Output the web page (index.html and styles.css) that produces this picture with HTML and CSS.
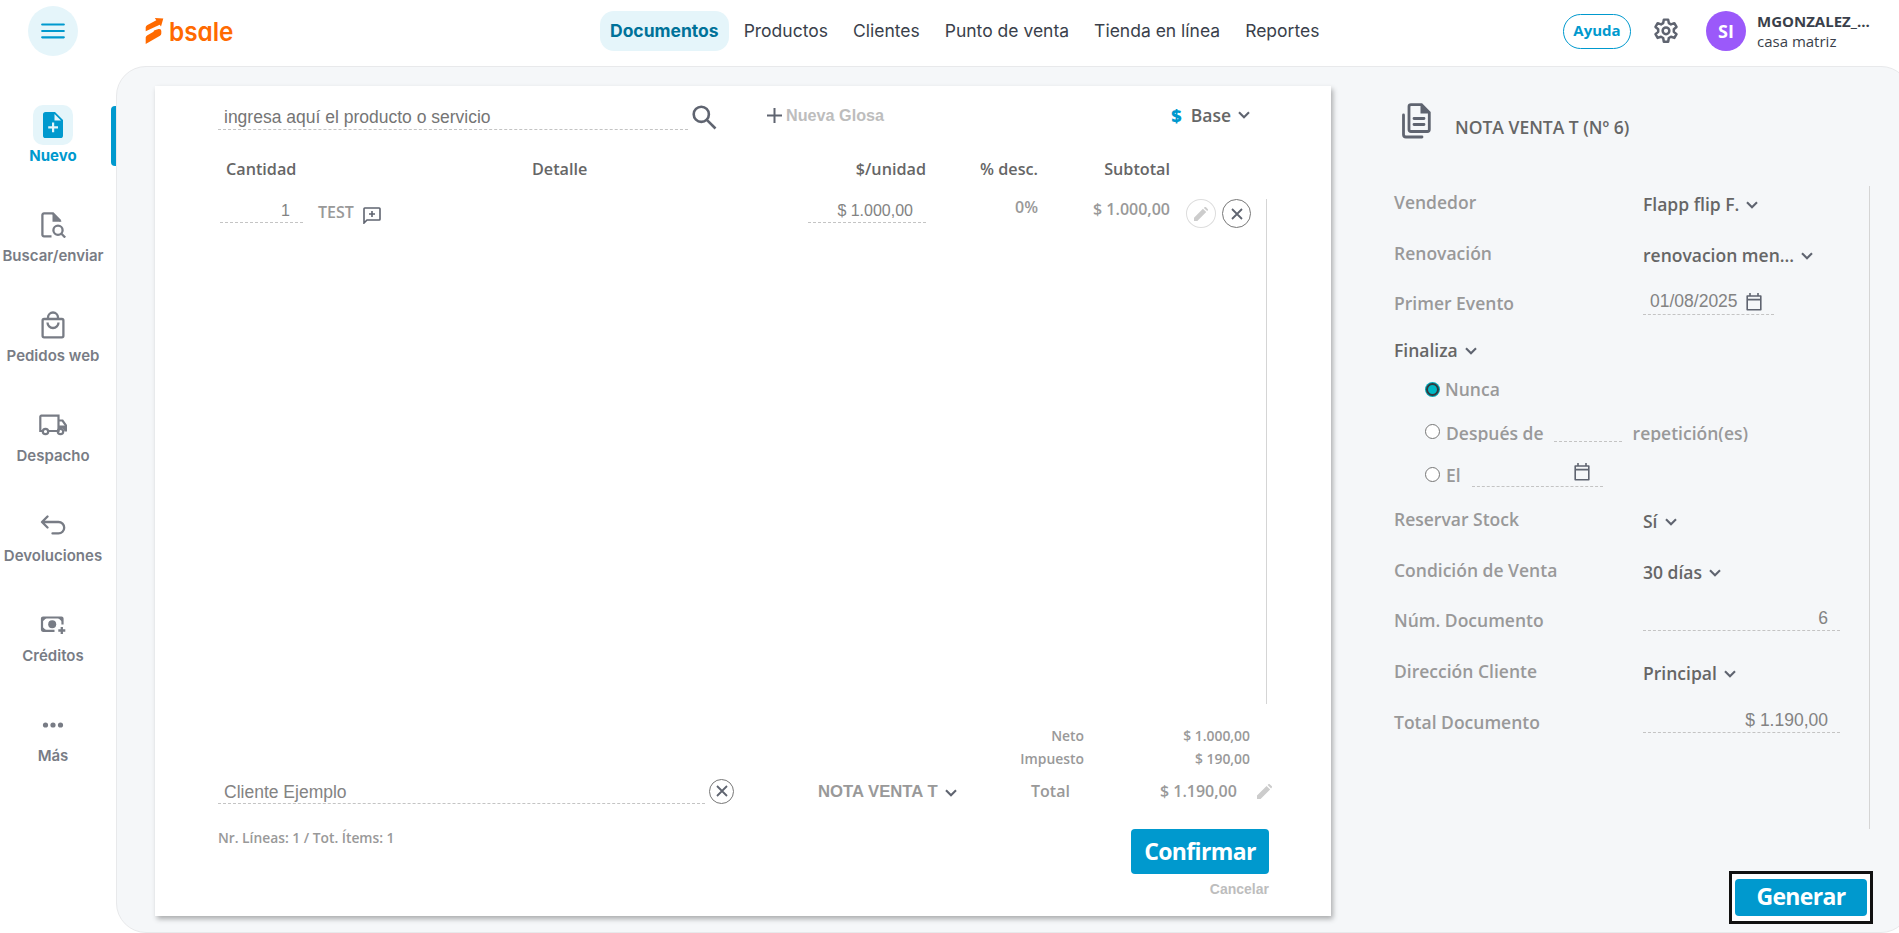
FILE: index.html
```
<!DOCTYPE html>
<html lang="es">
<head>
  <meta charset="UTF-8">
  <title>Bsale - Nota Venta T</title>
  <link rel="stylesheet" href="styles.css">
</head>
<body>
  <!-- Shared icons -->
  <svg class="sprite" aria-hidden="true">
    <symbol id="chevron" viewBox="0 0 12 8"><path d="M1 1.200l5 5 5-5" fill="none" stroke="currentColor" stroke-width="2.100"/></symbol>
    <symbol id="close" viewBox="0 0 12 12"><path d="M1 1l10 10M11 1L1 11" fill="none" stroke="currentColor" stroke-width="1.8"/></symbol>
    <symbol id="pencil" viewBox="0 0 16 16"><path d="M0 12.2L10.2 2l3.8 3.8L3.8 16H0zM11.3 1l.6-.6a1.3 1.3 0 0 1 1.9 0l1.8 1.8a1.3 1.3 0 0 1 0 1.9l-.6.6z" fill="currentColor"/></symbol>
    <symbol id="calendar" viewBox="0 0 16 18"><path d="M1.2 3h13.6v13.8H1.2zM1.2 6.6h13.6M4 0v3M12 0v3" fill="none" stroke="currentColor" stroke-width="1.6" stroke-linejoin="round"/></symbol>
  </svg>

  <div class="app">
    <aside class="sidebar">
      <button class="menu-btn">
        <svg width="24" height="18" viewBox="0 0 24 18"><path d="M1.2 2.5h21.6M1.2 9h21.6M1.2 15.3h21.6" stroke="#0099ce" stroke-width="2.2" stroke-linecap="round"/></svg>
      </button>
      <nav class="side-nav">
        <a class="side-item active">
          <span class="side-icon"><svg width="20" height="26" viewBox="0 0 20 26"><path fill="#0099ce" fill-rule="evenodd" d="M2.6 0H12l8 8v15.400a2.600 2.600 0 0 1-2.600 2.600H2.600A2.600 2.600 0 0 1 0 23.400V2.600A2.600 2.600 0 0 1 2.600 0zM11.500 2v6.500H18zM9 10.500V14.300H5.200V16.500H9V20.300H11.200V16.500H15V14.300H11.200V10.500z"/></svg></span>
          Nuevo
        </a>
        <a class="side-item">
          <span class="side-icon"><svg width="26" height="26" viewBox="0 0 26 26"><g fill="none" stroke="#787c85" stroke-width="2.300"><path d="M11.500 24.300H4A1.600 1.600 0 0 1 2.400 22.700V3A1.600 1.600 0 0 1 4 1.400H13L20.500 9"/><circle cx="18" cy="18.300" r="4.600"/><path d="M21.200 21.500l4 4"/></g><path d="M12.500 1v8.700h9.200z" fill="#787c85"/></svg></span>
          Buscar/enviar
        </a>
        <a class="side-item">
          <span class="side-icon"><svg width="24" height="28" viewBox="0 0 24 28"><g fill="none" stroke="#787c85" stroke-width="2.300"><rect x="1.600" y="8" width="20.800" height="18.300" rx="1.500"/><path d="M7 8V6.500a5 5 0 0 1 10 0V8M6.500 11.500a5.500 5.500 0 0 0 11 0"/></g></svg></span>
          Pedidos web
        </a>
        <a class="side-item">
          <span class="side-icon"><svg width="28" height="22" viewBox="0 0 28 22"><g fill="none" stroke="#787c85" stroke-width="2.200"><path d="M3 17H1.300V2.700A1 1 0 0 1 2.300 1.700H19.500V17H10M19.500 6.500H23.500L27 11.500V17"/><circle cx="6.500" cy="17.500" r="2.700"/><circle cx="21.500" cy="17.500" r="2.700"/></g><path d="M19.500 11.500H28V17.500H25.500A4 4 0 0 0 19.500 14.500z" fill="#787c85"/></svg></span>
          Despacho
        </a>
        <a class="side-item">
          <span class="side-icon"><svg width="26" height="20" viewBox="0 0 26 20"><path d="M7.500 1.500L2 7l5.500 5.500M2.500 7H18.500a5.700 5.700 0 0 1 0 11.400H12.500" fill="none" stroke="#787c85" stroke-width="2.300" stroke-linecap="round" stroke-linejoin="round"/></svg></span>
          Devoluciones
        </a>
        <a class="side-item">
          <span class="side-icon"><svg width="26" height="18" viewBox="0 0 26 18"><g fill="none" stroke="#787c85"><path d="M14.500 14.800H3A1 1 0 0 1 2 13.800V2.500A1 1 0 0 1 3 1.500H21.500A1 1 0 0 1 22.500 2.500V8.500" stroke-width="2.200"/><path d="M21.800 11v7M18.300 14.500h7" stroke-width="2.300"/></g><path d="M2 1.500h5L2 6zM22.500 1.500h-5l5 4.500zM2 15h5l-5-4.500z" fill="#787c85"/><circle cx="12.200" cy="8.200" r="4" fill="#787c85"/></svg></span>
          Créditos
        </a>
        <a class="side-item">
          <span class="side-icon"><svg width="22" height="6" viewBox="0 0 22 6"><g fill="#787c85"><circle cx="3.500" cy="3" r="2.600"/><circle cx="11" cy="3" r="2.600"/><circle cx="18.500" cy="3" r="2.600"/></g></svg></span>
          Más
        </a>
      </nav>
    </aside>

    <div class="content">
      <header class="topbar">
        <svg class="logo" width="90" height="28" viewBox="0 0 90 28">
          <path fill="#ff6a00" d="M.7 14.200V10.200Q.8 9 2 8.200L11.300 3.200 9.800 1 18.300 1.600 16 9.600 14.700 7.700zM.7 27V20.500Q.8 19.300 2 18.500L8.500 14.800 9 13.500 13.500 12Q16.300 11.500 16.300 14V16.500Q16.300 18 15 18.800z"/>
          <text x="24" y="23.500" textLength="64.500" lengthAdjust="spacingAndGlyphs">bsale</text>
        </svg>
        <nav class="top-nav">
          <a class="active">Documentos</a>
          <a>Productos</a>
          <a>Clientes</a>
          <a>Punto de venta</a>
          <a>Tienda en línea</a>
          <a>Reportes</a>
        </nav>
        <div class="user-area">
          <button class="help-btn">Ayuda</button>
          <svg class="gear" width="26" height="26" viewBox="0 0 24 24"><g fill="none" stroke="#5f6470" stroke-width="2.300" stroke-linejoin="round"><path d="M10 1.500h4l.6 3.200 2 1.200 3.100-1.100 2 3.500-2.500 2.100v2.400l2.500 2.100-2 3.500-3.100-1.100-2 1.200-.6 3.500h-4l-.6-3.500-2-1.200-3.100 1.100-2-3.500 2.500-2.100v-2.400l-2.500-2.100 2-3.500 3.100 1.100 2-1.200z"/><circle cx="12" cy="11.800" r="3.100"/></g></svg>
          <span class="avatar">SI</span>
          <div class="user-info">
            <strong>MGONZALEZ_...</strong>
            <span>casa matriz</span>
          </div>
        </div>
      </header>

      <main class="workspace">
        <section class="paper">
          <div class="search-row">
            <div class="field search-field">ingresa aquí el producto o servicio</div>
            <svg class="search-icon" width="25" height="25" viewBox="0 0 25 25"><g fill="none" stroke="#5f6470" stroke-width="2.600"><circle cx="9.300" cy="9.300" r="7.600"/><path d="M14.800 14.800l8.700 8.700"/></g></svg>
            <svg width="15" height="15" viewBox="0 0 15 15"><path d="M7.500 0v15M0 7.500h15" stroke="#5f6470" stroke-width="2"/></svg>
            <span class="new-note">Nueva Glosa</span>
            <div class="price-list"><b>$</b>Base<svg class="chev"><use href="#chevron"/></svg></div>
          </div>

          <div class="line-grid head">
            <span class="c-qty">Cantidad</span>
            <span class="c-detail">Detalle</span>
            <span class="c-num">$/unidad</span>
            <span class="c-num">% desc.</span>
            <span class="c-num">Subtotal</span>
          </div>

          <div class="lines">
            <div class="line-grid item">
              <div class="field qty">1</div>
              <div class="detail">TEST
                <svg width="18" height="17" viewBox="0 0 18 17"><path d="M1 16V1.800Q1 1 1.800 1H16.200Q17 1 17 1.800V12.200Q17 13 16.200 13H4zM9 4v6M6 7h6" fill="none" stroke="#5f6470" stroke-width="1.600"/></svg>
              </div>
              <div class="field price">$ 1.000,00</div>
              <div class="discount">0%</div>
              <div class="subtotal">$ 1.000,00</div>
              <div class="actions">
                <span class="round light"><svg width="14" height="14"><use href="#pencil"/></svg></span>
                <span class="round"><svg width="12" height="12"><use href="#close"/></svg></span>
              </div>
            </div>
          </div>

          <dl class="taxes">
            <dt>Neto</dt><dd>$ 1.000,00</dd>
            <dt>Impuesto</dt><dd>$ 190,00</dd>
          </dl>

          <div class="total-row">
            <div class="field client">Cliente Ejemplo</div>
            <span class="round small"><svg width="12" height="12"><use href="#close"/></svg></span>
            <div class="doc-type">NOTA VENTA T<svg class="chev"><use href="#chevron"/></svg></div>
            <span class="total-label">Total</span>
            <span class="total-value">$ 1.190,00</span>
            <svg class="edit-total" width="15" height="15"><use href="#pencil"/></svg>
          </div>

          <div class="paper-footer">
            <span class="counts">Nr. Líneas: 1 / Tot. Ítems: 1</span>
            <div class="confirm">
              <button class="btn confirm-btn">Confirmar</button>
              <a class="cancel">Cancelar</a>
            </div>
          </div>
        </section>

        <section class="settings">
          <div class="settings-title">
            <svg width="29" height="36" viewBox="0 0 29 36"><g fill="none" stroke="#5f6470" stroke-width="2.800" stroke-linecap="round"><path d="M1.500 12V31.500Q1.500 34 4 34H20"/><path d="M9 1.600H19.500L27.300 9.500V26.500Q27.300 28.500 25.300 28.500H9Q7 28.500 7 26.500V3.600Q7 1.600 9 1.600z"/><path d="M12 15.500H22M12 21.500H22"/></g><path d="M18.500 1.500V10.500H27.500z" fill="#5f6470"/></svg>
            <h1>NOTA VENTA T (Nº 6)</h1>
          </div>

          <div class="options">
            <div class="option"><label>Vendedor</label><div class="select">Flapp flip F.<svg class="chev"><use href="#chevron"/></svg></div></div>
            <div class="option"><label>Renovación</label><div class="select">renovacion men...<svg class="chev"><use href="#chevron"/></svg></div></div>
            <div class="option"><label>Primer Evento</label><div class="field date">01/08/2025<svg width="16" height="18"><use href="#calendar"/></svg></div></div>

            <div class="ends">
              <div class="select">Finaliza<svg class="chev"><use href="#chevron"/></svg></div>
              <div class="radio-row"><i class="radio on"></i>Nunca</div>
              <div class="radio-row repeat"><i class="radio"></i>Después de<div class="field times"></div>repetición(es)</div>
              <div class="radio-row"><i class="radio"></i>El<div class="field date until"><svg width="16" height="18"><use href="#calendar"/></svg></div></div>
            </div>

            <div class="option"><label>Reservar Stock</label><div class="select">Sí<svg class="chev"><use href="#chevron"/></svg></div></div>
            <div class="option"><label>Condición de Venta</label><div class="select">30 días<svg class="chev"><use href="#chevron"/></svg></div></div>
            <div class="option"><label>Núm. Documento</label><div class="field amount">6</div></div>
            <div class="option"><label>Dirección Cliente</label><div class="select">Principal<svg class="chev"><use href="#chevron"/></svg></div></div>
            <div class="option"><label>Total Documento</label><div class="field amount">$ 1.190,00</div></div>
          </div>

          <div class="generate-wrap"><button class="btn generate-btn">Generar</button></div>
        </section>
      </main>
    </div>
  </div>
</body>
</html>
```
FILE: styles.css
```
* {
  box-sizing: border-box;
}
html, body {
  margin: 0;
  height: 100%;
  overflow: hidden;
  background: #fff;
  font-family: "Open Sans", Arial, sans-serif;
}
button {
  border: 0;
  padding: 0;
  font-family: inherit;
}
svg {
  flex: none;
  display: block;
}
.sprite {
  display: none;
}
.app {
  display: flex;
  height: 933px;
}

/* Left sidebar */
.sidebar {
  flex: 0 0 116px;
}
.menu-btn {
  display: flex;
  align-items: center;
  justify-content: center;
  width: 50px;
  height: 50px;
  margin: 6px 0 49px 28px;
  border-radius: 50%;
  background: #e5f5fa;
}
.side-item {
  display: flex;
  flex-direction: column;
  align-items: center;
  height: 100px;
  padding-right: 10px;
  font: 600 15px/21px Inter, sans-serif;
  color: #787c85;
  white-space: nowrap;
}
.side-icon {
  display: flex;
  align-items: center;
  justify-content: center;
  width: 40px;
  height: 40px;
  border-radius: 10px;
}
.side-item.active {
  position: relative;
  font-weight: 700;
  color: #0099ce;
}
.side-item.active .side-icon {
  background: #e5f5fa;
}
/* marker on the edge of the sidebar */
.side-item.active::after {
  content: "";
  position: absolute;
  top: 1px;
  right: 0;
  width: 5px;
  height: 60px;
  border-radius: 4px 0 0 4px;
  background: #0099ce;
}

/* Top bar */
.content {
  flex: 1;
  min-width: 0;
}
.topbar {
  display: flex;
  align-items: center;
  height: 66px;
  padding: 0 30px 4px 29px;
}
.logo text {
  font: 600 26px Inter, sans-serif;
  font-feature-settings: "cv11";
  fill: #ff6a00;
}
.top-nav {
  display: flex;
  gap: 5px;
  margin-left: 365px;
}
.top-nav a {
  padding: 0 10px;
  border-radius: 14px;
  font: 400 17.500px/40px Inter, sans-serif;
  color: #3a3f4b;
  white-space: nowrap;
}
.top-nav a.active {
  background: #e5f5fa;
  font-weight: 700;
  color: #007299;
}
.user-area {
  display: flex;
  align-items: center;
  margin-left: auto;
}
.help-btn {
  width: 68px;
  height: 35px;
  padding-bottom: 2px;
  border: 1px solid #0099ce;
  border-radius: 18px;
  background: #fff;
  font-size: 15px;
  font-weight: 700;
  color: #0099ce;
}
.gear {
  margin: 0 27px 0 22px;
}
.avatar {
  width: 40px;
  margin-right: 11px;
  border-radius: 50%;
  background: #9b59fa;
  font-size: 18px;
  font-weight: 700;
  line-height: 40px;
  text-align: center;
  color: #fff;
}
.user-info {
  width: 112px;
  font-size: 15px;
  line-height: 20px;
  color: #3a3f4b;
  white-space: nowrap;
}
.user-info strong, .user-info span {
  display: block;
}

/* Gray work area */
.workspace {
  display: flex;
  width: 1795px;
  height: 867px;
  padding: 19px 0 0 38px;
  border: 1px solid #e8e9eb;
  border-radius: 30px;
  background: #f5f7f9;
}
.field {
  border-bottom: 1px dashed #c4c4c4;
  font-family: "Liberation Sans", Arial, sans-serif;
  font-size: 17.500px;
  color: #838383;
}
.chev {
  display: inline-block;
  width: 12px;
  height: 8px;
  margin-left: 7px;
  color: #5f6470;
}
.btn {
  border-radius: 4px;
  background: #0099ce;
  font-weight: 700;
  font-size: 23px;
  letter-spacing: -.65px;
  color: #fff;
}

/* Document sheet */
.paper {
  flex: 0 0 1176px;
  min-width: 0;
  height: 830px;
  padding: 0 62px 0 63px;
  background: #fff;
  box-shadow: 2px 3px 5px rgba(0, 0, 0, .3);
  font-size: 16px;
  font-weight: 600;
  color: #999;
}
.search-row {
  display: flex;
  align-items: center;
  height: 58px;
  color: #666;
}
.search-field {
  width: 470px;
  height: 28px;
  padding-left: 6px;
  font-weight: 400;
  line-height: 31px;
  color: #757575;
  margin-bottom: -1px;
}
.search-icon {
  margin: 4px 50px 0 4px;
}
.new-note {
  margin-left: 4px;
  font: 700 16.200px "Liberation Sans", Arial, sans-serif;
  color: #bdbdbd;
}
.price-list {
  display: flex;
  align-items: center;
  margin-left: auto;
  margin-right: 19px;
  font-size: 17.500px;
}
.price-list b {
  margin-right: 9px;
  font-size: 18px;
  color: #0099ce;
}
.line-grid {
  display: grid;
  grid-template-columns: 85px 505px 118px 112px 132px 96px;
}
.head {
  height: 55px;
  font-size: 16.200px;
  line-height: 50px;
  color: #666;
}
.c-qty {
  padding-left: 8px;
}
.c-detail {
  padding-left: 229px;
}
.c-num {
  text-align: right;
}
.lines {
  width: 1049px;
  height: 505px;
  border-right: 1px solid #d5d5d5;
}
.item {
  height: 30px;
}
.qty, .price {
  height: 24px;
  font-size: 16px;
  font-weight: 400;
  line-height: 23px;
  text-align: right;
}
.qty {
  margin-left: 2px;
  padding-right: 13px;
}
.price {
  padding-right: 13px;
}
.detail {
  display: flex;
  align-items: center;
  gap: 9px;
  height: 26px;
  padding-left: 15px;
}
.detail svg {
  margin-top: 6px;
}
.discount {
  line-height: 16px;
  text-align: right;
}
.subtotal {
  line-height: 20px;
  text-align: right;
}
.actions {
  display: flex;
  gap: 6px;
  padding-left: 16px;
}
.round {
  display: flex;
  flex: none;
  align-items: center;
  justify-content: center;
  width: 29px;
  height: 29px;
  border: 1px solid #777;
  border-radius: 50%;
  color: #5f6470;
}
.round.light {
  width: 30px;
  border-color: #ddd;
  color: #ccc;
}
.round.small {
  width: 25px;
  height: 25px;
}
.taxes {
  display: grid;
  grid-template-columns: 866px 166px;
  margin: 20px 0 0;
  font-size: 13.900px;
  line-height: 23px;
  text-align: right;
}
.taxes dd {
  margin: 0;
}
.total-row {
  display: flex;
  align-items: center;
  height: 42px;
}
.total-row > * {
  flex: none;
}
.client {
  width: 487px;
  height: 26px;
  margin-right: 4px;
  padding-left: 6px;
  font-weight: 400;
  line-height: 29px;
}
.doc-type {
  width: 213px;
  margin-left: 84px;
  padding-top: 2px;
  font: 700 16.700px "Liberation Sans", Arial, sans-serif;
  white-space: nowrap;
}
.total-value {
  width: 167px;
  text-align: right;
}
.edit-total {
  margin-left: 20px;
  color: #ccc;
}
.paper-footer {
  display: flex;
  justify-content: space-between;
  padding-top: 17px;
}
.counts {
  font-size: 13.800px;
  line-height: 17px;
}
.confirm {
  display: flex;
  flex-direction: column;
  align-items: flex-end;
  gap: 6px;
}
.confirm-btn {
  width: 138px;
  height: 45px;
  padding-bottom: 1px;
}
.cancel {
  font: 700 14px/18px "Liberation Sans", Arial, sans-serif;
  color: #bdbdbd;
}

/* Right column with the document settings */
.settings {
  flex: 0 0 479px;
  margin-left: 63px;
  font-size: 17.500px;
  font-weight: 600;
  color: #999;
}
.settings-title {
  display: flex;
  align-items: center;
  height: 69px;
  padding-left: 8px;
}
.settings-title h1 {
  margin: 12px 0 0 24px;
  font-size: 17.500px;
  font-weight: 600;
  color: #666;
}
.options {
  width: 476px;
  height: 643px;
  margin-top: 31px;
  border-right: 1px solid #d5d5d5;
}
.option {
  display: grid;
  grid-template-columns: 249px 1fr;
  height: 50.700px;
  line-height: 33px;
}
.select {
  line-height: 36px;
  color: #666;
}
.select .chev {
  margin-bottom: 2px;
}
.date {
  display: flex;
  align-items: center;
  gap: 8px;
  width: 131px;
  height: 28px;
  padding: 2px 0 0 7px;
  font-weight: 400;
}
.date svg {
  color: #5f6470;
}
.amount {
  width: 197px;
  height: 27px;
  padding-right: 12px;
  font-weight: 400;
  line-height: 28px;
  text-align: right;
}
.ends {
  height: 172px;
  margin-top: -7px;
  padding-top: 1px;
}
.ends .select {
  height: 37px;
}
.radio-row {
  display: flex;
  align-items: center;
  height: 43px;
  padding: 0 0 3px 31px;
}
/* the limit field cuts its row off at the underline */
.radio-row.repeat {
  padding-bottom: 2px;
  clip-path: inset(0 0 13px);
}
.radio {
  flex: none;
  width: 15px;
  height: 15px;
  margin-right: 6px;
  border: 1px solid #767676;
  border-radius: 50%;
  background: #fff;
}
.radio.on {
  width: 13px;
  height: 13px;
  margin: 1px 6px 0 1px;
  border: 2px solid #333b40;
  background: #00b8c4;
  box-shadow: 0 0 0 1px #00a9b8;
}
.radio:not(.on) {
  margin-bottom: 2px;
}
.times {
  width: 68px;
  height: 19px;
  margin: 0 11px 1px 10px;
}
.until {
  margin: 0 0 5px 11px;
  padding: 0 0 0 102px;
}
.generate-wrap {
  width: 144px;
  height: 53px;
  margin: 42px 0 0 335px;
  padding: 5px 3px;
  border: 3px solid #111;
  background: #fff;
}
.generate-btn {
  display: block;
  width: 132px;
  height: 37px;
  padding-bottom: 3px;
}
```
